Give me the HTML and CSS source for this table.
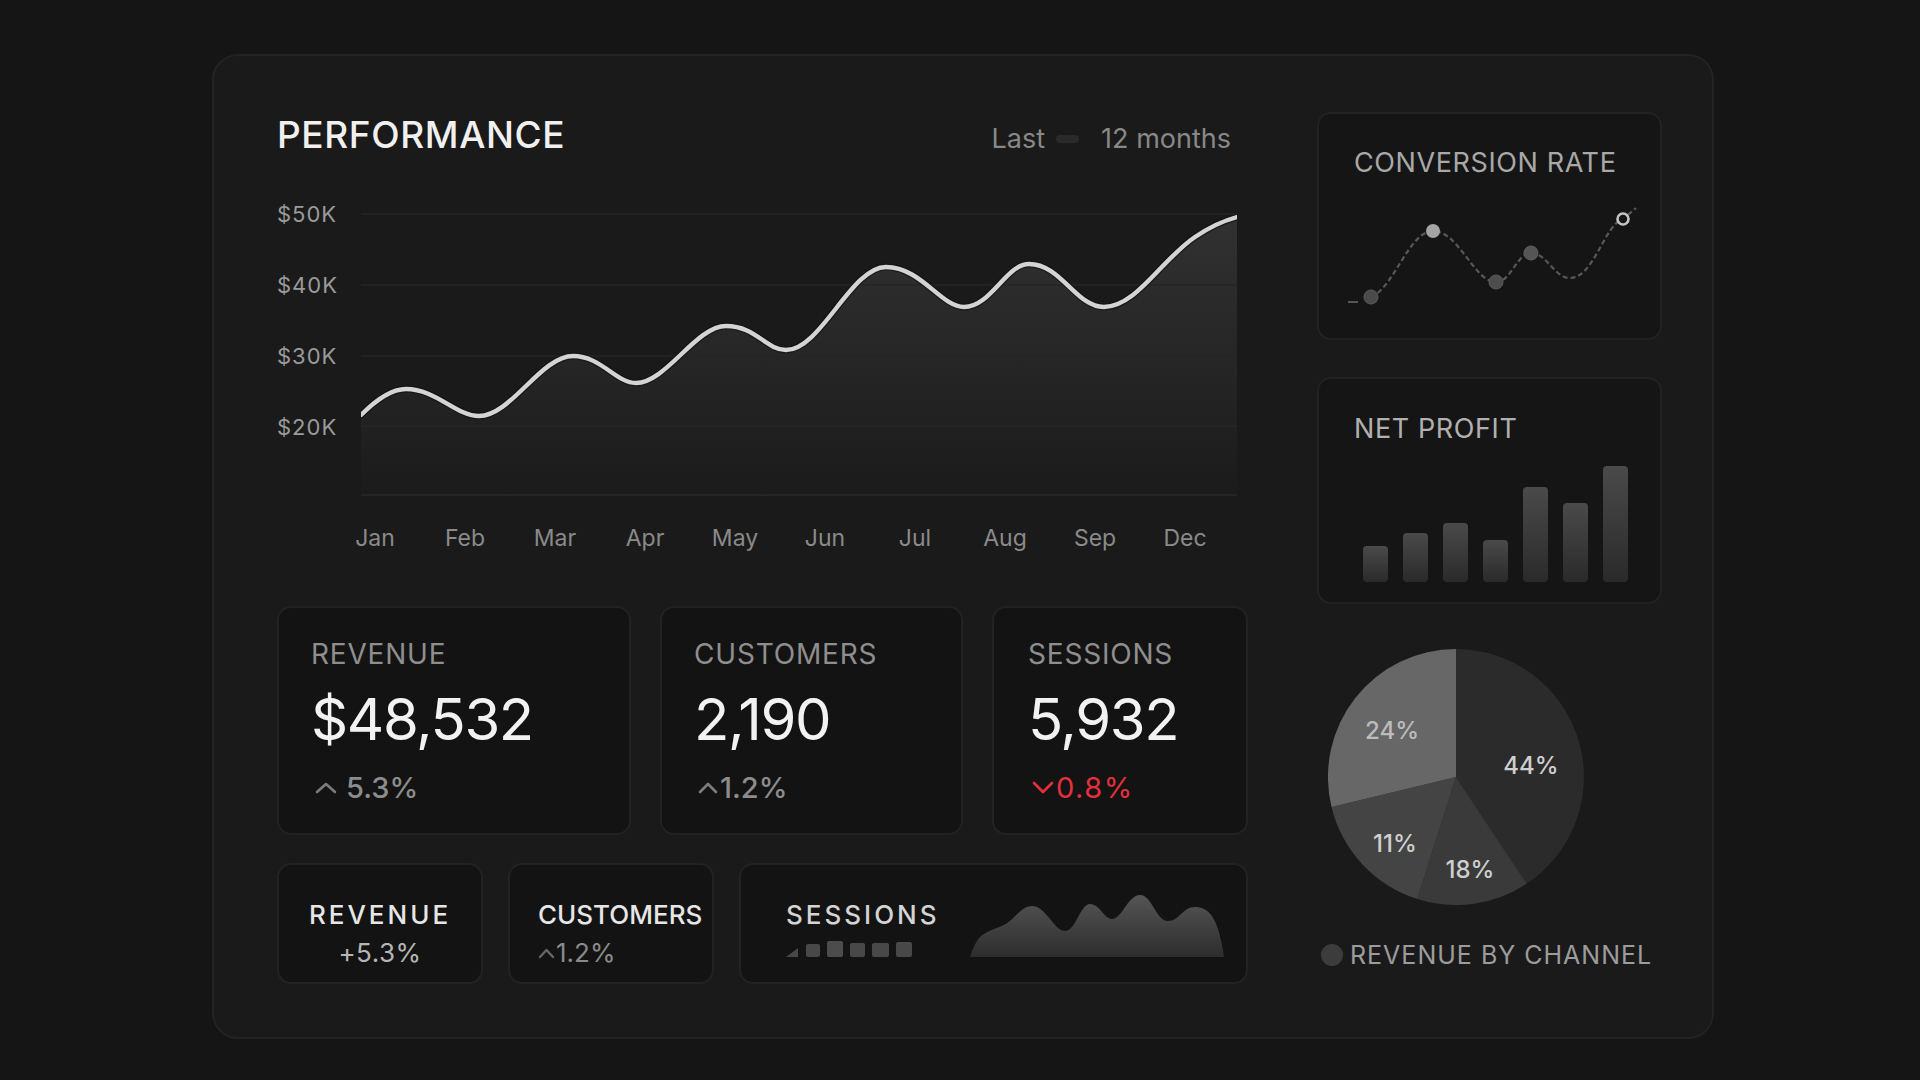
FILE: index.html
```html
<!DOCTYPE html>
<html lang="en">
<head>
<meta charset="utf-8">
<title>Performance</title>
<link rel="stylesheet" href="styles.css">
</head>
<body>
<div class="page">
  <div class="card">
    <section class="main">
      <header class="head">
        <h1 class="title">PERFORMANCE</h1>
        <div class="range">Last <span class="pill"></span> 12 months</div>
      </header>

      <div class="chart">
        <div class="yaxis">
          <span>$50K</span><span>$40K</span><span>$30K</span><span>$20K</span>
        </div>
        <svg class="plot" width="876" height="300" viewBox="0 0 876 300">
          <defs>
            <linearGradient id="areaFill" x1="0" y1="0" x2="0" y2="1">
              <stop offset="0" stop-color="#313131"/>
              <stop offset="0.55" stop-color="#252525"/>
              <stop offset="1" stop-color="#1b1b1b"/>
            </linearGradient>
          </defs>
          <path d="M0,215 C15,200 30,189 45,189 C75,189 95,216 118,216 C150,216 180,156 212,156 C240,156 255,183 275,183 C305,183 335,126 365,126 C395,126 405,150 425,150 C460,150 490,67 525,67 C560,67 580,107 603,107 C630,107 645,64 668,64 C700,64 715,107 743,107 C775,107 800,60 834,37 C850,26 865,20 876,17 L876,295 L0,295 Z" fill="url(#areaFill)"/>
          <g stroke="#262626" stroke-width="1.5">
            <line x1="0" y1="14" x2="876" y2="14"/>
            <line x1="0" y1="85" x2="876" y2="85"/>
            <line x1="0" y1="156" x2="876" y2="156"/>
            <line x1="0" y1="226" x2="876" y2="226"/>
            <line x1="0" y1="295" x2="876" y2="295" stroke="#2a2a2a"/>
          </g>
          <path d="M0,215 C15,200 30,189 45,189 C75,189 95,216 118,216 C150,216 180,156 212,156 C240,156 255,183 275,183 C305,183 335,126 365,126 C395,126 405,150 425,150 C460,150 490,67 525,67 C560,67 580,107 603,107 C630,107 645,64 668,64 C700,64 715,107 743,107 C775,107 800,60 834,37 C850,26 865,20 876,17" fill="none" stroke="#111" stroke-width="7" stroke-linecap="round" opacity="0.6"/>
          <path d="M0,215 C15,200 30,189 45,189 C75,189 95,216 118,216 C150,216 180,156 212,156 C240,156 255,183 275,183 C305,183 335,126 365,126 C395,126 405,150 425,150 C460,150 490,67 525,67 C560,67 580,107 603,107 C630,107 645,64 668,64 C700,64 715,107 743,107 C775,107 800,60 834,37 C850,26 865,20 876,17" fill="none" stroke="#d4d4d4" stroke-width="4.4" stroke-linecap="round"/>
        </svg>
      </div>

      <div class="xaxis">
        <span>Jan</span><span>Feb</span><span>Mar</span><span>Apr</span><span>May</span>
        <span>Jun</span><span>Jul</span><span>Aug</span><span>Sep</span><span>Dec</span>
      </div>

      <div class="stats">
        <div class="stat">
          <div class="stat-label">REVENUE</div>
          <div class="stat-value">$48,532</div>
          <div class="stat-change up wide">
            <svg class="chev" width="22" height="12" viewBox="0 0 22 12"><polyline points="2,10 11,2 20,10" fill="none" stroke="#7c7c7c" stroke-width="2.6" stroke-linecap="round" stroke-linejoin="round"/></svg>
            <span>5.3%</span>
          </div>
        </div>
        <div class="stat">
          <div class="stat-label">CUSTOMERS</div>
          <div class="stat-value">2,190</div>
          <div class="stat-change up">
            <svg class="chev" width="20" height="12" viewBox="0 0 20 12"><polyline points="2,10 10,2 18,10" fill="none" stroke="#7c7c7c" stroke-width="2.6" stroke-linecap="round" stroke-linejoin="round"/></svg>
            <span>1.2%</span>
          </div>
        </div>
        <div class="stat">
          <div class="stat-label">SESSIONS</div>
          <div class="stat-value">5,932</div>
          <div class="stat-change down">
            <svg class="chev" width="22" height="13" viewBox="0 0 22 13"><polyline points="2,2 11,11 20,2" fill="none" stroke="#e3303c" stroke-width="2.8" stroke-linecap="round" stroke-linejoin="round"/></svg>
            <span>0.8%</span>
          </div>
        </div>
      </div>

      <div class="minis">
        <div class="mini mini-center">
          <div class="mini-title spaced">REVENUE</div>
          <div class="mini-sub light">+5.3%</div>
        </div>
        <div class="mini">
          <div class="mini-title">CUSTOMERS</div>
          <div class="mini-sub">
            <svg class="chev-sm" width="17" height="11" viewBox="0 0 17 11"><polyline points="2,9 8.5,2 15,9" fill="none" stroke="#666" stroke-width="2.4" stroke-linecap="round" stroke-linejoin="round"/></svg>1.2%
          </div>
        </div>
        <div class="mini mini-sessions">
          <div class="sess-text">
            <div class="mini-title spaced sess-title">SESSIONS</div>
            <div class="squares">
              <span class="ramp"></span>
              <span class="sq s1"></span>
              <span class="sq s2"></span>
              <span class="sq s3"></span>
              <span class="sq s4"></span>
              <span class="sq s5"></span>
            </div>
          </div>
          <svg class="spark" width="254" height="62" viewBox="0 0 254 62">
            <defs>
              <linearGradient id="sparkFill" x1="0" y1="0" x2="0" y2="1">
                <stop offset="0" stop-color="#555"/>
                <stop offset="1" stop-color="#2d2d2d"/>
              </linearGradient>
            </defs>
            <path d="M0,62 C4,50 8,42 14,39 C22,34 30,32 36,29 C46,22 52,11 62,11 C76,11 84,36 95,36 C106,36 110,9 120,9 C130,9 134,24 142,24 C152,24 158,0 170,0 C182,0 186,26 198,26 C210,26 212,12 225,12 C238,12 244,22 248,34 C251,44 253,54 254,62 Z" fill="url(#sparkFill)"/>
          </svg>
        </div>
      </div>
    </section>

    <aside class="side">
      <div class="panel conv">
        <div class="panel-title">CONVERSION RATE</div>
        <svg class="conv-chart" width="341" height="130" viewBox="0 0 341 130">
          <line x1="29" y1="112" x2="39" y2="112" stroke="#555" stroke-width="2"/>
          <path d="M52,107 C75,98 90,41 114,41 C140,41 155,92 177,92 C192,92 198,63 212,63 C228,63 235,88 251,88 C275,88 285,35 304,29 L317,18" fill="none" stroke="#585858" stroke-width="2.2" stroke-dasharray="5 3"/>
          <circle cx="52" cy="107" r="7" fill="#4a4a4a" stroke="#5a5a5a" stroke-width="1"/>
          <circle cx="114" cy="41" r="7" fill="#a4a4a4"/>
          <circle cx="177" cy="92" r="7" fill="#4d4d4d" stroke="#5c5c5c" stroke-width="1"/>
          <circle cx="212" cy="63" r="7" fill="#555" stroke="#606060" stroke-width="1"/>
          <circle cx="304" cy="29" r="5.5" fill="#151515" stroke="#c4c4c4" stroke-width="2.6"/>
        </svg>
      </div>

      <div class="panel net">
        <div class="panel-title">NET PROFIT</div>
        <div class="bars">
          <span class="bar" style="height:36px"></span>
          <span class="bar" style="height:49px"></span>
          <span class="bar" style="height:59px"></span>
          <span class="bar" style="height:42px"></span>
          <span class="bar" style="height:95px"></span>
          <span class="bar" style="height:79px"></span>
          <span class="bar" style="height:116px"></span>
        </div>
      </div>

      <svg class="pie" width="256" height="256" viewBox="0 0 256 256">
        <path d="M128,128 L128,0 A128,128 0 0 1 198.8,234.6 Z" fill="#2b2b2b"/>
        <path d="M128,128 L198.8,234.6 A128,128 0 0 1 89.3,250 Z" fill="#3a3a3a"/>
        <path d="M128,128 L89.3,250 A128,128 0 0 1 3.5,157.9 Z" fill="#444444"/>
        <path d="M128,128 L3.5,157.9 A128,128 0 0 1 128,0 Z" fill="#676767"/>
        <g class="pie-labels">
          <text x="64" y="90" text-anchor="middle" fill="#bcbcbc">24%</text>
          <text x="203" y="125" text-anchor="middle" fill="#cfcfcf">44%</text>
          <text x="67" y="203" text-anchor="middle" fill="#cfcfcf">11%</text>
          <text x="142" y="229" text-anchor="middle" fill="#cfcfcf">18%</text>
        </g>
      </svg>

      <div class="legend">
        <span class="legend-dot"></span>
        <span class="legend-text">REVENUE BY CHANNEL</span>
      </div>
    </aside>
  </div>
</div>
</body>
</html>
```

FILE: styles.css
```css
* { box-sizing: border-box; }

html, body {
  margin: 0;
  padding: 0;
  background: #151515;
  font-family: "Inter", "Liberation Sans", sans-serif;
  color: #e8e8e8;
}

.page {
  width: 1920px;
  height: 1080px;
  padding: 54px 0 0 212px;
}

.card {
  width: 1502px;
  background: #1a1a1a;
  border: 2px solid #232323;
  border-radius: 26px;
  padding: 56px 50px 53px 63px;
  display: grid;
  grid-template-columns: 971px 345px;
  column-gap: 69px;
  align-items: start;
}

/* ---------- main column ---------- */
.main {
  display: flex;
  flex-direction: column;
}

.head {
  margin-top: 5px;
  padding-right: 17px;
  display: flex;
  justify-content: space-between;
  align-items: baseline;
}

.title {
  margin: 0;
  font-size: 37px;
  line-height: 36px;
  font-weight: 500;
  letter-spacing: 0.6px;
  color: #f0f0f0;
}

.range {
  display: flex;
  align-items: baseline;
  font-size: 27px;
  line-height: 36px;
  color: #888;
}

.pill {
  display: inline-block;
  width: 23px;
  height: 8px;
  border-radius: 4px;
  background: #2a2a2a;
  margin: 0 22px 0 11px;
  align-self: center;
}

.chart {
  margin-top: 43px;
  display: flex;
  height: 300px;
}

.yaxis {
  width: 84px;
  display: flex;
  flex-direction: column;
  gap: 43px;
  padding-top: 0;
}

.yaxis span {
  height: 28px;
  line-height: 28px;
  font-size: 22px;
  letter-spacing: 1px;
  color: #9a9a9a;
}

.plot { display: block; }

.xaxis {
  margin-top: 23px;
  margin-left: 53px;
  display: grid;
  grid-template-columns: repeat(10, 90px);
}

.xaxis span {
  text-align: center;
  font-size: 23px;
  line-height: 30px;
  color: #8a8a8a;
}

/* stat cards */
.stats {
  margin-top: 53px;
  display: grid;
  grid-template-columns: 354px 303px 1fr;
  column-gap: 29px;
  height: 229px;
}

.stat {
  background: #131313;
  border: 2px solid #222;
  border-radius: 14px;
  padding: 32px 0 0 32px;
}

.stat:nth-child(3) { padding-left: 34px; }

.stat-label {
  font-size: 28px;
  line-height: 28px;
  letter-spacing: 0.8px;
  color: #8e8e8e;
}

.stat-value {
  margin-top: 22px;
  font-size: 58px;
  line-height: 58px;
  letter-spacing: -1.4px;
  color: #f2f2f2;
}

.stat-change {
  margin-top: 25px;
  display: flex;
  align-items: center;
  font-size: 29px;
  line-height: 29px;
  font-weight: 500;
  color: #8c8c8c;
}

.stat-change .chev { margin-right: 2px; margin-left: 4px; }
.stat-change.wide .chev { margin-right: 9px; }

.stat-change.down {
  color: #e3303c;
  letter-spacing: 1.5px;
  font-weight: 400;
}

/* mini cards */
.minis {
  margin-top: 28px;
  display: grid;
  grid-template-columns: 206px 206px 1fr;
  column-gap: 25px;
  height: 121px;
}

.mini {
  background: #131313;
  border: 2px solid #222;
  border-radius: 14px;
  padding: 36px 0 0 28px;
}

.mini-center {
  padding-left: 0;
  text-align: center;
}

.mini-title {
  font-size: 26px;
  line-height: 27px;
  font-weight: 500;
  color: #e6e6e6;
}

.mini-title.spaced { letter-spacing: 3px; }

.mini-sub {
  margin-top: 12px;
  font-size: 26px;
  line-height: 26px;
  color: #8a8a8a;
  display: flex;
  align-items: center;
}

.mini-sub.light {
  color: #b5b5b5;
  justify-content: center;
  letter-spacing: 0.5px;
}

.chev-sm { margin-right: 1px; }

.mini-sessions {
  display: flex;
  align-items: flex-end;
  justify-content: space-between;
  padding: 0 22px 25px 45px;
}

.sess-title {
  color: #d4d4d4;
  letter-spacing: 2.4px;
}

.squares {
  margin-top: 12px;
  display: flex;
  align-items: flex-end;
  gap: 7px;
  height: 17px;
}

.ramp {
  width: 12px;
  height: 9px;
  background: #484848;
  clip-path: polygon(0 100%, 100% 0, 100% 100%);
  margin-right: 1px;
}

.sq {
  display: block;
  border-radius: 2px;
  background: #484848;
}

.s1 { width: 14px; height: 13px; }
.s2 { width: 16px; height: 16px; background: #4c4c4c; }
.s3 { width: 15px; height: 14px; }
.s4 { width: 17px; height: 14px; }
.s5 { width: 16px; height: 15px; }

.spark { display: block; margin-bottom: 0; }

/* ---------- side column ---------- */
.side {
  display: flex;
  flex-direction: column;
}

.panel {
  background: #151515;
  border: 2px solid #222;
  border-radius: 14px;
}

.panel-title {
  font-size: 27px;
  line-height: 27px;
  letter-spacing: 0.6px;
  color: #a8a8a8;
  padding: 35px 0 0 35px;
}

.conv { height: 228px; }

.conv-chart {
  display: block;
  margin-top: 14px;
}

.net {
  margin-top: 37px;
  height: 227px;
  display: flex;
  flex-direction: column;
}

.net .panel-title { padding-top: 36px; color: #b0b0b0; }

.bars {
  margin-top: auto;
  display: flex;
  align-items: flex-end;
  gap: 15px;
  padding: 0 0 20px 44px;
}

.bar {
  display: block;
  width: 25px;
  border-radius: 4px;
  background: linear-gradient(to bottom, #4a4a4a, #2a2a2a);
}

.pie {
  display: block;
  margin: 45px 0 0 11px;
}

.pie-labels text {
  font-family: "Inter", "Liberation Sans", sans-serif;
  font-size: 24px;
  font-weight: 500;
}

.legend {
  margin: 34px 0 0 4px;
  display: flex;
  align-items: center;
  gap: 7px;
}

.legend-dot {
  width: 22px;
  height: 22px;
  border-radius: 50%;
  background: #3c3c3c;
}

.legend-text {
  font-size: 25px;
  line-height: 32px;
  letter-spacing: 1px;
  color: #9c9c9c;
}
```
